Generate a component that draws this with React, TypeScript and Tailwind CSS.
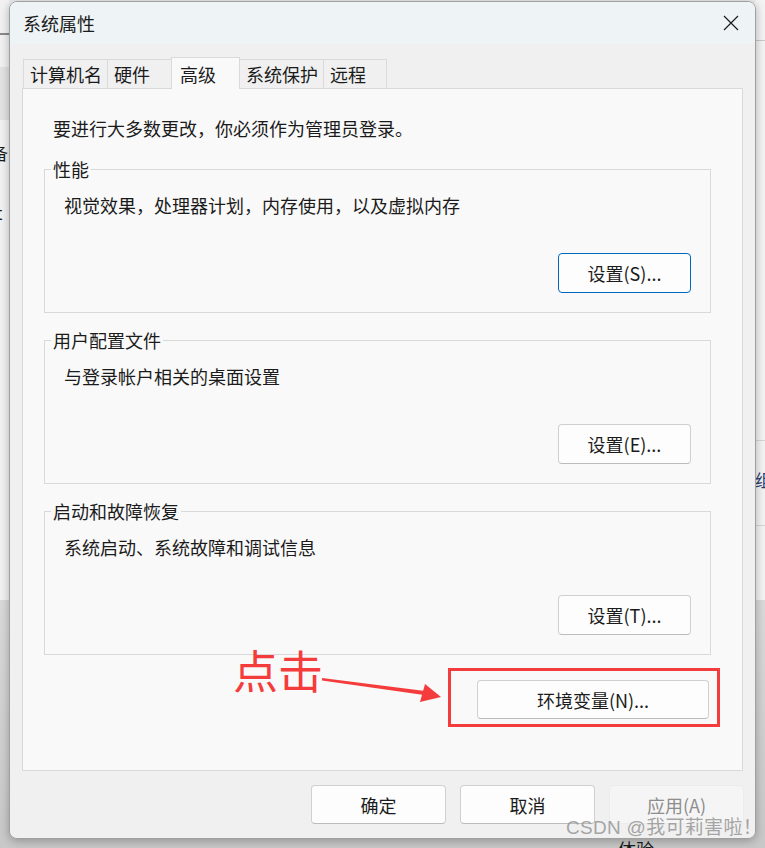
import type { ReactNode } from "react";
import clsx from "clsx";

const groups = [
  { title: "性能", desc: "视觉效果，处理器计划，内存使用，以及虚拟内存", button: "设置(S)...", primary: true },
  { title: "用户配置文件", desc: "与登录帐户相关的桌面设置", button: "设置(E)...", primary: false },
  { title: "启动和故障恢复", desc: "系统启动、系统故障和调试信息", button: "设置(T)...", primary: false },
];

const tabs = [
  { label: "计算机名", width: "w-[84px]" },
  { label: "硬件", width: "w-[64px]" },
  { label: "高级", width: "w-[69px]", active: true },
  { label: "系统保护", width: "w-[83px]" },
  { label: "远程", width: "w-[64px]" },
];

function WinButton({
  children,
  className,
  primary,
  disabled,
}: {
  children: ReactNode;
  className?: string;
  primary?: boolean;
  disabled?: boolean;
}) {
  return (
    <button
      type="button"
      disabled={disabled}
      className={clsx(
        "flex items-center justify-center rounded-[4px] border text-[18px] leading-none",
        primary
          ? "border-[#0067c0] bg-[#fdfdfd] text-[#1b1b1b]"
          : disabled
            ? "border-[#ececec] bg-[#f5f5f5] text-[#8d8d8d]"
            : "border-[#d0d0d0] border-b-[#bcbcbc] bg-[#fdfdfd] text-[#1b1b1b]",
        className,
      )}
    >
      {children}
    </button>
  );
}

export default function App() {
  return (
    <div className="relative h-[848px] w-[765px] overflow-hidden bg-[#ececec] font-['Noto_Sans_CJK_SC','Noto_Sans',sans-serif] text-[#1b1b1b]">
      {/* desktop behind the dialog */}
      <div className="absolute left-0 top-0 flex h-[600px] w-[9px] flex-col bg-[#f2f2f2]">
        <div className="mt-[33px] h-[2px] bg-[#8a8a8a]" />
        <div className="mt-[32px] h-[53px] bg-[#e3e3e3]" />
      </div>
      <span className="absolute left-[-9px] top-[141px] text-[17px] leading-[24px]">备</span>
      <span className="absolute left-[-4px] top-[201px] text-[17px] leading-[24px]">t</span>
      <div className="absolute left-[755px] top-0 flex h-[600px] w-[10px] flex-col bg-[#f3f3f3]">
        <div className="mt-[40px] h-px bg-[#c9c9c9]" />
        <div className="mt-[399px] h-px bg-[#d6d6d6]" />
        <div className="mt-[84px] h-px bg-[#d6d6d6]" />
      </div>
      <span className="absolute left-[755px] top-[468px] text-[17px] leading-[24px] text-[#1d3b6c]">组</span>
      <div className="absolute left-0 top-[600px] h-[248px] w-[765px] bg-gradient-to-b from-[#dadada] to-[#c8c8c8]" />
      <span className="absolute left-[618px] top-[837px] text-[18px] leading-[24px]">体验</span>

      <div className="relative pl-[9px] pt-px">
        <div className="flex h-[838px] w-[747px] flex-col overflow-hidden rounded-[8px] border border-[#a0a0a0] shadow-[0_2px_10px_rgba(0,0,0,0.28)]">
          <div className="flex h-[42px] shrink-0 items-center justify-between bg-[#eef4f6] pl-[13px] pr-[15px]">
            <span className="text-[18px] leading-[24px]">系统属性</span>
            <svg width="16" height="16" viewBox="0 0 16 16" className="mr-[1px]">
              <path d="M1 1 L15 15 M15 1 L1 15" stroke="#1b1b1b" strokeWidth="1.2" fill="none" />
            </svg>
          </div>

          <div className="flex flex-1 flex-col bg-[#f0f0f0] px-[12px] pt-[13px]">
            <div className="flex h-[31px] items-end pl-px">
              {tabs.map((t, i) => (
                <div
                  key={t.label}
                  className={clsx(
                    "flex items-center border-l border-t border-[#dadada] pl-[6px] text-[18px] leading-[24px]",
                    t.width,
                    i === tabs.length - 1 && "border-r",
                    t.active
                      ? "relative z-10 -mb-px h-[32px] border-r bg-[#f9f9f9] pl-[8px]"
                      : "h-[29px] bg-[#f0f0f0]",
                    tabs[i - 1]?.active && "border-l-0",
                  )}
                >
                  {t.label}
                </div>
              ))}
            </div>

            <div className="relative h-[683px] border border-[#d9d9d9] bg-[#f9f9f9] px-[21px] pt-[27px]">
              <p className="ml-[9px] text-[18px] leading-[24px]">要进行大多数更改，你必须作为管理员登录。</p>

              <div className="mt-[18px] flex flex-col gap-[16px]">
                {groups.map((g) => (
                  <fieldset key={g.title} className="w-[667px] border border-[#d9d9d9] p-0">
                    <legend className="ml-[6px] px-[2px] text-[18px] leading-[22px]">{g.title}</legend>
                    <div className="flex flex-col px-[19px] pb-[19px] pt-[13px]">
                      <p className="text-[18px] leading-[24px]">{g.desc}</p>
                      <div className="mt-[36px] flex justify-end">
                        <WinButton primary={g.primary} className="h-[40px] w-[133px]">
                          {g.button}
                        </WinButton>
                      </div>
                    </div>
                  </fieldset>
                ))}
              </div>

              <WinButton className="ml-[433px] mt-[25px] h-[39px] w-[232px]">环境变量(N)...</WinButton>

              {/* annotation */}
              <div className="absolute left-[425px] top-[579px] h-[59px] w-[272px] border-[3px] border-[#f53c3c]" />
              <span className="absolute left-[210px] top-[554px] text-[45px] font-normal leading-[54px] text-[#f53c3c]">
                点击
              </span>
              <svg className="absolute left-[299px] top-[589px]" width="124" height="24" viewBox="0 0 124 24">
                <polygon points="0,0 0,2.5 102,17 103,13" fill="#f53c3c" />
                <polygon points="119,19 103,6 98,24" fill="#f53c3c" />
              </svg>
            </div>

            <div className="-mr-px mt-[14px] flex justify-end gap-[14px]">
              <WinButton className="h-[39px] w-[135px]">确定</WinButton>
              <WinButton className="h-[39px] w-[135px]">取消</WinButton>
              <WinButton disabled className="h-[39px] w-[135px]">应用(A)</WinButton>
            </div>
          </div>
        </div>
      </div>

      <span className="absolute left-[566px] top-[816px] font-['Liberation_Sans','Noto_Sans_CJK_SC',sans-serif] text-[19px] leading-[24px] tracking-[0.3px] text-[#9a9a9a]/90">
        CSDN @我可莉害啦！
      </span>
    </div>
  );
}
